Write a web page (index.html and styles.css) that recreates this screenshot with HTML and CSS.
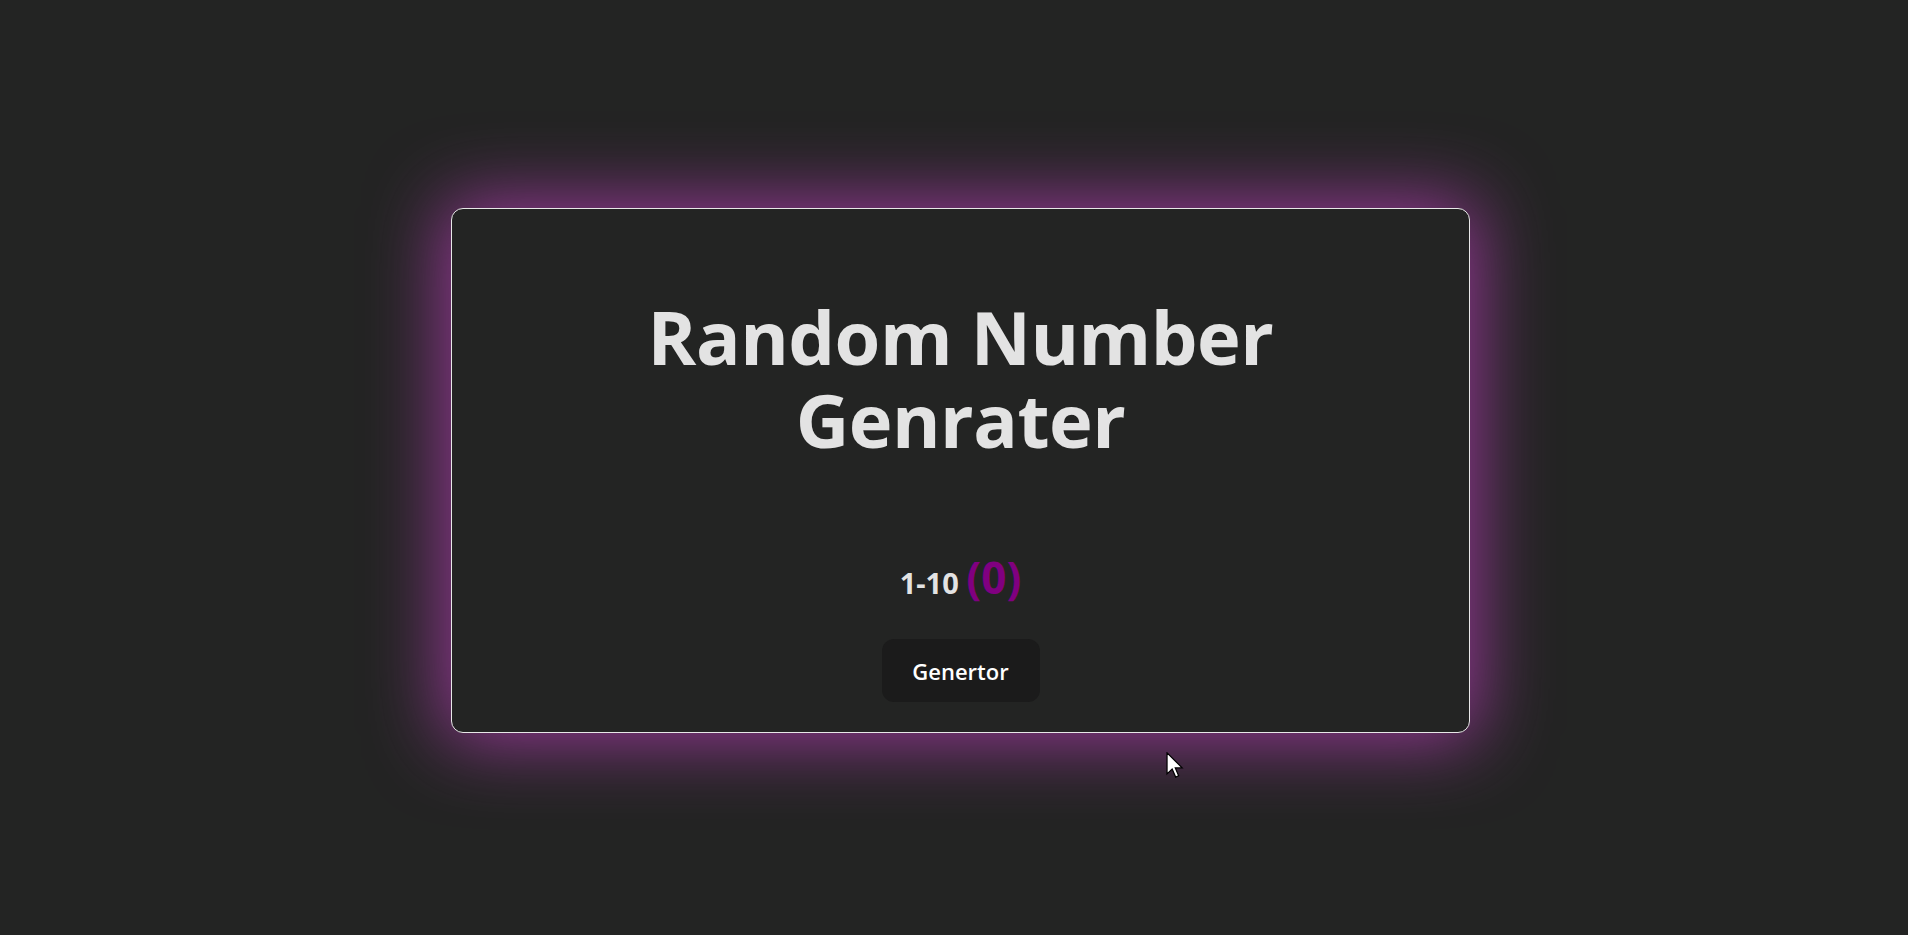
FILE: index.html
```html
<!DOCTYPE html>
<html lang="en">
<head>
<meta charset="utf-8">
<title>Random Number Genrater</title>
<link rel="stylesheet" href="styles.css">
</head>
<body>
<main class="page">
  <section class="card">
    <h1 class="title">Random Number<br>Genrater</h1>
    <p class="range">1-10 <span class="result">(0)</span></p>
    <button class="btn" type="button">Genertor</button>
  </section>
</main>
<svg class="cursor" width="18" height="27" viewBox="0 0 13 20"><path d="M0.6 0.6 L0.6 16.2 L4.4 12.6 L7 18.6 L9.2 17.6 L6.7 11.8 L11.8 11.8 Z" fill="#fff" stroke="#000" stroke-width="0.9" stroke-linejoin="miter"/></svg>
</body>
</html>
```
FILE: styles.css
```css
html, body {
  margin: 0;
  padding: 0;
  background: #232423;
  height: 100%;
  overflow: hidden;
}
.page {
  display: flex;
  justify-content: center;
  padding: 208px 0 0 13px;
  font-family: "Open Sans", "Noto Sans", sans-serif;
}
.card {
  box-sizing: border-box;
  width: 1019px;
  height: 525px;
  border: 1px solid #e8e8e8;
  border-radius: 12px;
  background: #232423;
  box-shadow: 0 0 75px 8px rgba(170, 60, 170, 0.85);
  display: flex;
  flex-direction: column;
  align-items: center;
}
.title {
  margin: 86px 0 0;
  font-size: 74px;
  line-height: 83px;
  letter-spacing: -0.5px;
  font-weight: 700;
  color: #e3e3e3;
  text-align: center;
}
.range {
  margin: 96px 0 0;
  font-size: 29px;
  font-weight: 700;
  color: #e3e3e3;
  line-height: 40px;
}
.result {
  font-size: 44px;
  color: #800080;
}
.btn {
  margin-top: 36px;
  width: 158px;
  height: 63px;
  border: none;
  border-radius: 12px;
  background: #1b1b1b;
  color: #ffffff;
  font-family: inherit;
  font-size: 22px;
  font-weight: 600;
}
.cursor {
  position: absolute;
  left: 1166px;
  top: 752px;
}
```
